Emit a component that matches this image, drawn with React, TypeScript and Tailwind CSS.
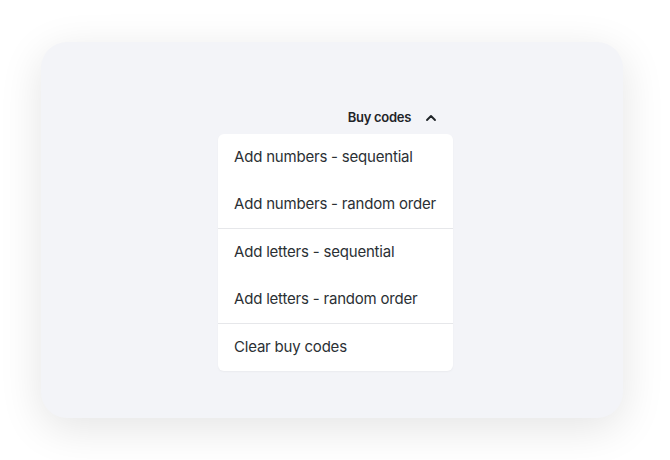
import { ChevronUp } from "lucide-react";

const groups = [
  ["Add numbers - sequential", "Add numbers - random order"],
  ["Add letters - sequential", "Add letters - random order"],
  ["Clear buy codes"],
];

export default function App() {
  return (
    <div className="w-[670px] h-[460px] bg-white flex items-start justify-center pt-[42px] font-['Inter',sans-serif]">
      <div className="w-[582px] h-[376px] ml-[-6px] rounded-[26px] bg-[#f3f4f8] shadow-[0_10px_44px_rgba(0,0,0,0.11)] flex flex-col items-center pt-[66px]">
        <div className="flex flex-col items-end w-[235px] ml-[7px]">
          <button className="flex items-center gap-[12px] pr-[14px] h-[20px] text-[13px] font-semibold text-[#1f2428] tracking-[-0.3px]">
            Buy codes
            <ChevronUp size={16} strokeWidth={2.8} className="text-[#1f2428]" />
          </button>
          <div className="mt-[6px] w-full bg-white rounded-[6px] shadow-[0_1px_2px_rgba(0,0,0,0.04)]">
            {groups.map((g, i) => (
              <div key={i} className={i > 0 ? "border-t border-[#e6e7ea]" : ""}>
                {g.map((item) => (
                  <div key={item} className="h-[47px] flex items-center px-[16px] text-[15px] text-[#2b3034] tracking-[-0.2px]">
                    {item}
                  </div>
                ))}
              </div>
            ))}
          </div>
        </div>
      </div>
    </div>
  );
}
